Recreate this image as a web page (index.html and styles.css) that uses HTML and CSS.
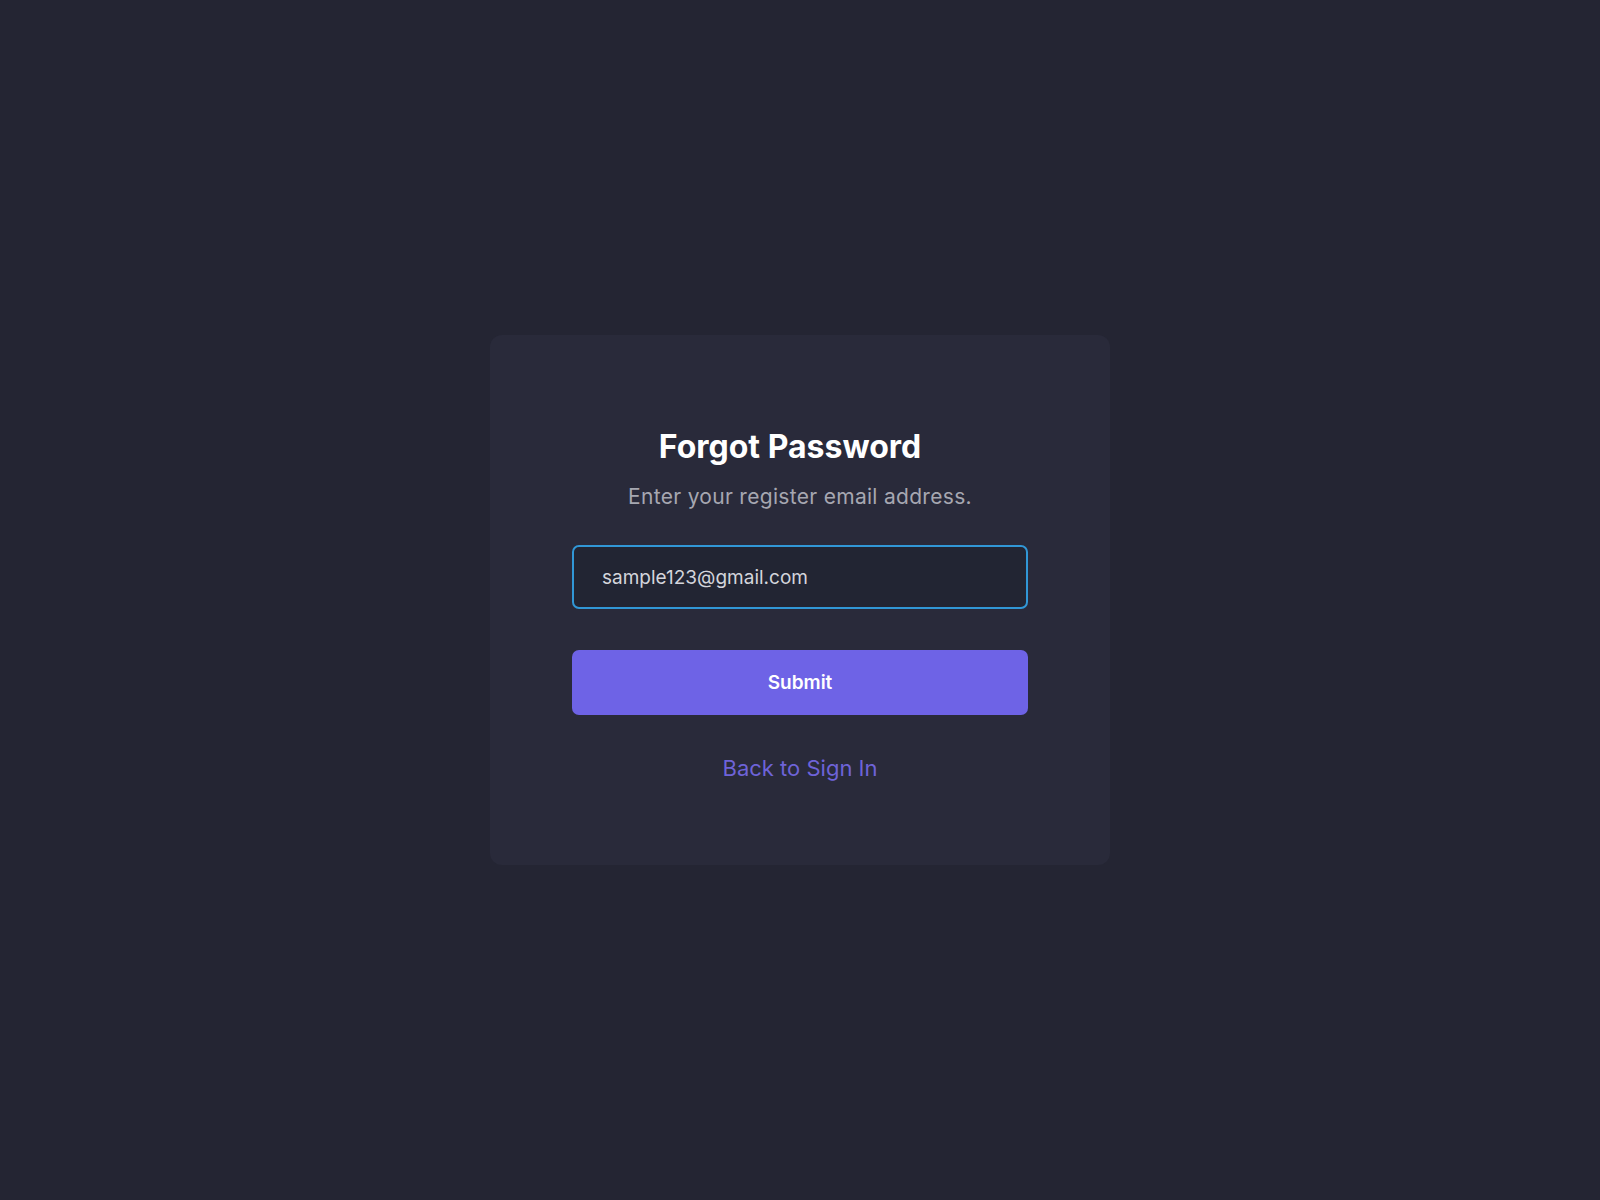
FILE: index.html
```html
<!DOCTYPE html>
<html>
<head>
    <title>Forgot Password</title>
    <link rel="stylesheet" href="styles.css">
</head>
<body>
    <!-- the reset card -->
    <div class="card">
        <h1 class="title">Forgot Password</h1>
        <p class="subtitle">Enter your register email address.</p>
        <form class="form" onsubmit="return false">
            <input class="field" type="email" value="sample123@gmail.com">
            <button class="submit" type="submit">Submit</button>
        </form>
        <a class="back" href="#">Back to Sign In</a>
    </div>
</body>
</html>
```

FILE: styles.css
```css
/* Page background and centering */
body {
    font-family: Inter, "Noto Sans", sans-serif;
    background: #242533;
    margin: 0;
    padding: 0;
    height: 100vh;
    display: flex;
    align-items: center;
    justify-content: center;
}

/* The card */
.card {
    width: 620px;
    height: 530px;
    box-sizing: border-box;
    background: #292a3a;
    border-radius: 12px;
    padding: 93px 82px 0;
    display: flex;
    flex-direction: column;
    align-items: center;
}

/* Heading and hint */
.title {
    margin: 0;
    padding-right: 20px;
    font-size: 32px;
    line-height: 38px;
    font-weight: 700;
    color: #ffffff;
}
.subtitle {
    margin: 17px 0 0;
    font-size: 21px;
    line-height: 28px;
    letter-spacing: 0.3px;
    color: #a6a7b1;
}

/* Form */
.form {
    width: 100%;
    margin-top: 34px;
    display: flex;
    flex-direction: column;
    gap: 41px;
}
.field {
    height: 64px;
    box-sizing: border-box;
    border: 2px solid #3197d6;
    border-radius: 7px;
    background: #222533;
    padding: 0 28px;
    font-family: inherit;
    font-size: 19px;
    color: #d4d5dc;
    outline: none;
}
.submit {
    height: 65px;
    border: none;
    border-radius: 7px;
    background: #6e63e6;
    color: #ffffff;
    font-family: inherit;
    font-size: 19px;
    font-weight: 600;
    cursor: pointer;
}

/* Link back */
.back {
    margin-top: 39px;
    font-size: 22px;
    line-height: 28px;
    color: #6e63d8;
    text-decoration: none;
}
```
